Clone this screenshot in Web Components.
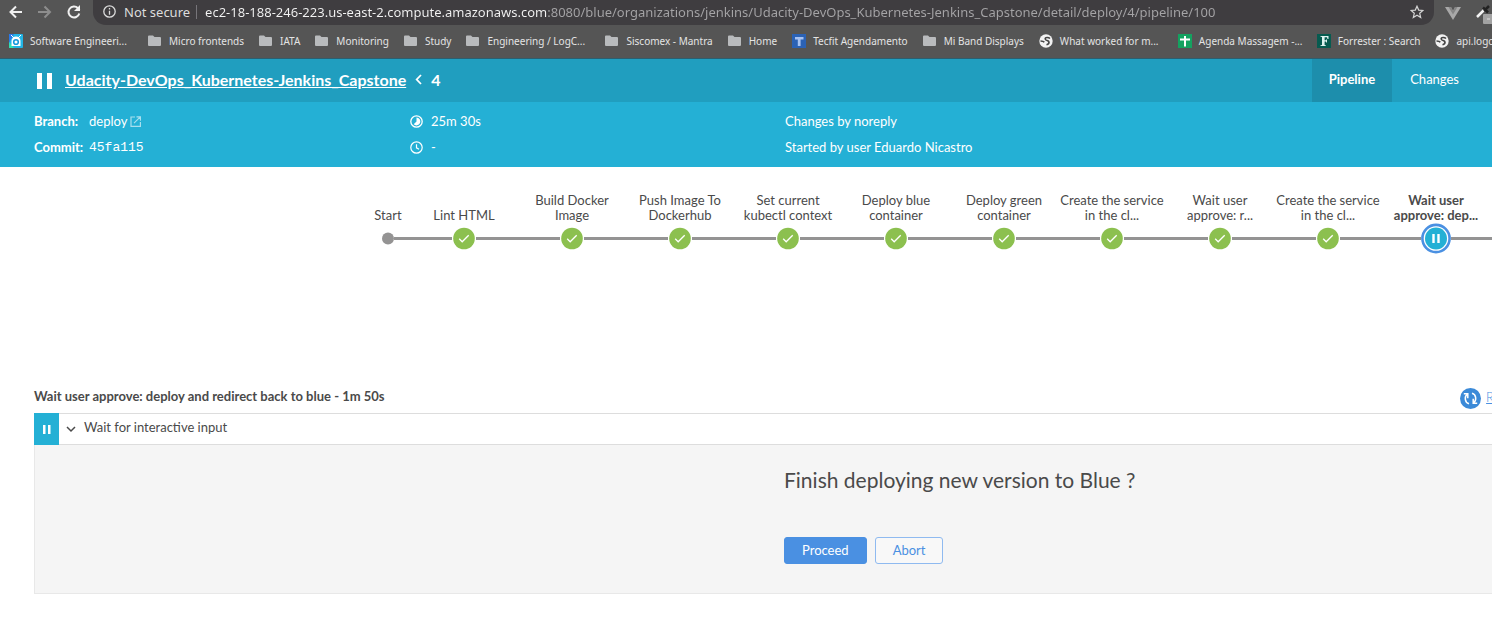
<!DOCTYPE html>
<html lang="en">
<head>
<meta charset="utf-8">
<title>Udacity-DevOps_Kubernetes-Jenkins_Capstone / deploy / 4</title>
<style>
  html, body { margin: 0; background: #fff; }
  body { font-family: Lato, sans-serif; font-size: 13px; line-height: 16px; color: #4a4a4a; overflow-x: hidden; }
</style>
</head>
<body>
<jenkins-window></jenkins-window>

<template id="jenkins-window">
  <style>
    :host { display: block; overflow: hidden; }
  </style>
  <browser-bar></browser-bar>
  <bookmark-bar></bookmark-bar>
  <run-header></run-header>
  <main>
    <pipeline-graph></pipeline-graph>
    <step-log></step-log>
  </main>
</template>

<template id="browser-bar">
  <style>
    :host { display: flex; align-items: center; height: 25px; padding: 0 0 0 8px; background: #555; font-family: "Noto Sans", sans-serif; font-size: 13px; color: #dcdcdc; overflow: hidden; }
    button { appearance: none; border: 0; padding: 0; background: none; color: #f1f1f1; display: flex; flex: none; }
    button[disabled] { color: #8d8d8d; }
    svg { display: block; flex: none; }
    nav { display: flex; gap: 13px; padding-bottom: 2px; }
    .omni { flex: 1; min-width: 0; display: flex; align-items: center; height: 25px; box-sizing: border-box; margin-left: 11px; padding: 0 10px 2px; background: #3f3d40; border-radius: 0 0 13px 13px; }
    .secure { margin-left: 8px; padding-right: 6px; border-right: 1px solid #77757a; line-height: 14px; white-space: nowrap; }
    input { flex: 1; min-width: 0; height: 23px; border: 0; padding: 0; margin-left: 8px; outline: 0; font: inherit; -webkit-text-fill-color: transparent; background: linear-gradient(90deg, #f4f4f4 343px, #a5a4a6 343px); -webkit-background-clip: text; background-clip: text; }
    .ext { display: flex; align-items: center; gap: 14px; width: 58px; flex: none; padding-left: 11px; box-sizing: border-box; overflow: hidden; }
  </style>
  <nav>
    <button aria-label="Back"><svg width="16" height="16" viewBox="0 0 16 16" fill="none" stroke="currentColor" stroke-width="2"><path d="M14 8H3M8 2.500L2.500 8 8 13.500"/></svg></button>
    <button aria-label="Forward" disabled><svg width="16" height="16" viewBox="0 0 16 16" fill="none" stroke="currentColor" stroke-width="2"><path d="M1 8h11M7.500 2.500L13 8 7.500 13.500"/></svg></button>
    <button aria-label="Reload"><svg width="16" height="16" viewBox="0 0 16 16" fill="none" stroke="currentColor" stroke-width="2"><path d="M13.300 9.500A5.500 5.500 0 1 1 12 4.200L13.500 6"/><path d="M14 1v6H8z" fill="currentColor" stroke="none"/></svg></button>
  </nav>
  <div class="omni">
    <svg width="13" height="13" viewBox="0 0 13 13" fill="none" stroke="#dcdcdc" stroke-width="1.300"><circle cx="6.500" cy="6.500" r="5.700"/><path d="M6.500 3v1.500M6.500 5.700v4"/></svg>
    <span class="secure">Not secure</span>
    <input aria-label="Address" type="text" spellcheck="false" value="ec2-18-188-246-223.us-east-2.compute.amazonaws.com:8080/blue/organizations/jenkins/Udacity-DevOps_Kubernetes-Jenkins_Capstone/detail/deploy/4/pipeline/100">
    <button aria-label="Bookmark this page"><svg width="14" height="14" viewBox="0 0 14 14" fill="none" stroke="#d5d5d5" stroke-width="1.200"><path d="M7 1.200l1.700 3.900 4.200.400-3.200 2.800 1 4.200L7 10.300l-3.700 2.200 1-4.200L1.100 5.500l4.200-.400z"/></svg></button>
  </div>
  <div class="ext">
    <svg width="16" height="14" viewBox="0 0 16 14"><path d="M0 1h6l2 4 2-4h6L8 14z" fill="#a8a8a8"/><path d="M3.500 1H6l2 4 2-4h2.500L8 8.500z" fill="#858585"/></svg>
    <svg width="18" height="22" viewBox="0 0 18 22"><path d="M2 15l7-7" stroke="#f4f4f4" stroke-width="2.500"/><path d="M8 5.500l5 5M9 9l5-5" stroke="#222" stroke-width="2.500"/><rect x="8" y="12" width="12" height="10" rx="1" fill="#a3a3a3"/><path d="M12 17h3" stroke="#ddd"/></svg>
  </div>
</template>

<template id="bookmark-bar">
  <style>
    :host { display: flex; align-items: center; height: 31px; padding: 0 0 2px 9px; background: #555; border-bottom: 1px solid #2b5f70; overflow: hidden; font-family: "Noto Sans", sans-serif; font-size: 10px; color: #e4e4e4; }
  </style>
  <book-mark icon="hub" wide>Software Engineeri...</book-mark>
  <book-mark icon="folder">Micro frontends</book-mark>
  <book-mark icon="folder">IATA</book-mark>
  <book-mark icon="folder">Monitoring</book-mark>
  <book-mark icon="folder">Study</book-mark>
  <book-mark icon="folder" wide>Engineering / LogC...</book-mark>
  <book-mark icon="folder">Siscomex - Mantra</book-mark>
  <book-mark icon="folder">Home</book-mark>
  <book-mark icon="tecfit">Tecfit Agendamento</book-mark>
  <book-mark icon="folder">Mi Band Displays</book-mark>
  <book-mark icon="globe" wide>What worked for m...</book-mark>
  <book-mark icon="sheet" wide>Agenda Massagem -...</book-mark>
  <book-mark icon="forrester">Forrester : Search</book-mark>
  <book-mark icon="globe">api.logco</book-mark>
</template>

<template id="book-mark">
  <style>
    :host { display: block; flex: none; padding-right: 15px; box-sizing: border-box; }
    :host([wide]) { width: 139px; padding-right: 0; }
    a { display: flex; align-items: center; gap: 7px; color: inherit; text-decoration: none; white-space: nowrap; }
    svg { display: block; flex: none; }
  </style>
  <a href="#"><svg width="14" height="14" viewBox="0 0 14 14" aria-hidden="true"></svg><span><slot></slot></span></a>
</template>

<template id="run-header">
  <style>
    :host { display: block; background: #24b0d5; color: #fff; }
    .top { display: flex; align-items: center; height: 43px; padding-left: 37px; background: #209ebf; }
    svg { display: block; flex: none; }
    h1 { display: flex; align-items: center; gap: 9px; flex: 1; margin: 0 0 0 12px; padding-bottom: 2px; font-size: 16px; line-height: 20px; font-weight: 700; }
    a { color: inherit; }
    nav { display: flex; align-self: stretch; margin-right: 16px; }
    nav a { display: flex; align-items: center; padding: 0 17px 3px 18px; text-decoration: none; }
    nav a[aria-current] { background: #1d8eac; font-weight: 700; padding-left: 17px; }
    .info { display: grid; grid-template-columns: 376fr 375fr 707fr; row-gap: 10px; padding: 11px 0 12px 34px; }
    .info div { display: flex; align-items: center; height: 16px; }
    b { width: 55px; }
    .icon { margin-right: 8px; }
    code { font: 13px/16px "Liberation Mono", monospace; padding-top: 2px; }
    .out { margin-left: 3px; opacity: .6; }
  </style>
  <div class="top">
    <svg width="16" height="18" viewBox="0 0 16 18" fill="#fff"><path d="M0 1h5v16H0zM10 1h5v16h-5z"/></svg>
    <h1><a href="#">Udacity-DevOps_Kubernetes-Jenkins_Capstone</a>
      <svg width="7" height="11" viewBox="0 0 7 11" fill="none" stroke="#fff" stroke-width="1.800"><path d="M6 1L1.700 5.500 6 10"/></svg><span>4</span></h1>
    <nav><a href="#" aria-current="page">Pipeline</a><a href="#">Changes</a></nav>
  </div>
  <div class="info">
    <div><b>Branch:</b><span>deploy</span><svg class="out" width="11" height="11" viewBox="0 0 11 11" fill="none" stroke="#fff" stroke-width="1.200"><path d="M5 1H1v9.400h9.400V6M6.500.800h4v4M10.300.900L4 7.200"/></svg></div>
    <div><svg class="icon" width="13" height="13" viewBox="0 0 13 13"><circle cx="6.500" cy="6.500" r="5.700" fill="none" stroke="#fff" stroke-width="1.300"/><path d="M6.500 2.600a3.900 3.900 0 1 1-2.800 6.700L6.500 6.500z" fill="#fff"/></svg><span>25m 30s</span></div>
    <div><span>Changes by noreply</span></div>
    <div><b>Commit:</b><code>45fa115</code></div>
    <div><svg class="icon" width="13" height="13" viewBox="0 0 13 13" fill="none" stroke="#fff" stroke-width="1.200"><circle cx="6.500" cy="6.500" r="5.700"/><path d="M6.500 3.300v3.500l2.500 1.500"/></svg><span>-</span></div>
    <div><span>Started by user Eduardo Nicastro</span></div>
  </div>
</template>

<template id="pipeline-graph">
  <style>
    :host { display: flex; height: 217px; padding: 26px 0 0 366px; box-sizing: border-box; overflow: hidden; }
  </style>
  <pipeline-stage state="start">Start</pipeline-stage>
  <pipeline-stage state="ok">Lint HTML</pipeline-stage>
  <pipeline-stage state="ok">Build Docker<br>Image</pipeline-stage>
  <pipeline-stage state="ok">Push Image To<br>Dockerhub</pipeline-stage>
  <pipeline-stage state="ok">Set current<br>kubectl context</pipeline-stage>
  <pipeline-stage state="ok">Deploy blue<br>container</pipeline-stage>
  <pipeline-stage state="ok">Deploy green<br>container</pipeline-stage>
  <pipeline-stage state="ok">Create the service<br>in the cl...</pipeline-stage>
  <pipeline-stage state="ok">Wait user<br>approve: r...</pipeline-stage>
  <pipeline-stage state="ok">Create the service<br>in the cl...</pipeline-stage>
  <pipeline-stage state="paused">Wait user<br>approve: dep...</pipeline-stage>
  <pipeline-stage state="next"></pipeline-stage>
</template>

<template id="pipeline-stage">
  <style>
    :host { display: block; flex: none; width: 108px; text-align: center; line-height: 15px; }
    :host([state="start"]) { width: 44px; }
    :host([state="paused"]) { font-weight: 700; }
    .label { display: flex; align-items: flex-end; justify-content: center; height: 30px; white-space: nowrap; }
    .track { display: flex; align-items: center; height: 31px; }
    .track::before, .track::after { content: ""; flex: 1; height: 3px; background: #949393; }
    :host([state="start"]) .track::before { background: none; }
    svg { display: block; flex: none; }
  </style>
  <div class="label"><span><slot></slot></span></div>
  <div class="track"></div>
</template>

<template id="step-log">
  <style>
    :host { display: block; padding-left: 34px; }
    header { display: flex; align-items: center; height: 29px; }
    h2 { flex: 1; margin: 0; padding-bottom: 6px; font-size: 13px; line-height: 16px; }
    .restart { display: flex; align-items: center; gap: 5px; color: #4a90e2; margin-right: -2px; font-weight: 300; }
    .restart span { padding-bottom: 4px; }
    svg { display: block; flex: none; }
    .step { display: flex; align-items: center; height: 32px; box-sizing: border-box; border-top: 1px solid #ddd; border-bottom: 1px solid #ddd; }
    .state { display: flex; align-items: center; justify-content: center; width: 25px; height: 32px; background: #24b0d5; }
    .toggle { display: flex; align-items: center; gap: 8px; appearance: none; margin: 0; padding: 0 0 4px 7px; border: 0; background: none; font: inherit; color: inherit; }
    .toggle svg { margin-top: 4px; }
    .prompt { display: grid; grid-template-columns: 749fr 708fr; height: 149px; box-sizing: border-box; background: #f5f5f5; border-left: 1px solid #e8e8e8; border-bottom: 1px solid #e8e8e8; }
    .body { grid-column: 2; padding-top: 20px; }
    h3 { margin: 0 0 42px; font-size: 21px; line-height: 30px; font-weight: 400; }
    .actions { display: flex; gap: 8px; }
    .actions button { height: 27px; padding: 0 17px 2px; border: 1px solid #8fbaf0; border-radius: 3px; background: #f8f8f8; color: #4a90e2; font: inherit; }
    .actions .primary { background: #4a90e2; border-color: #4a90e2; color: #fff; }
  </style>
  <header>
    <h2>Wait user approve: deploy and redirect back to blue - 1m 50s</h2>
    <a class="restart" href="#" aria-label="Restart"><svg width="21" height="21" viewBox="0 0 21 21"><circle cx="10.500" cy="10.500" r="10.500" fill="#3b8ad8"/><g fill="none" stroke="#fff" stroke-width="1.500"><path d="M9 15.800C4.500 14.500 4.300 8.500 7.300 6.200M12 5.200c4.500 1.300 4.700 7.300 1.700 9.600"/><path d="M3.800 5.800h4v4.500M17.200 15.200h-4v-4.500"/></g></svg><span>R</span></a>
  </header>
  <div class="step">
    <span class="state"><svg width="8" height="9" viewBox="0 0 8 9" fill="#fff"><path d="M0 0h2.500v9H0zM5 0h2.500v9H5z"/></svg></span>
    <button class="toggle" aria-expanded="true"><svg width="10" height="7" viewBox="0 0 10 7" fill="none" stroke="#4a4a4a" stroke-width="1.500"><path d="M1 1l4 4 4-4"/></svg><span>Wait for interactive input</span></button>
  </div>
  <div class="prompt">
    <div class="body">
      <h3>Finish deploying new version to Blue ?</h3>
      <div class="actions"><button class="primary">Proceed</button><button>Abort</button></div>
    </div>
  </div>
</template>

<script>
  const stamp = (host, name) => {
    const root = host.attachShadow({ mode: "open" });
    root.append(document.getElementById(name).content.cloneNode(true));
    return root;
  };

  const ICONS = {
    folder: '<path d="M0 2.500Q0 1.500 1 1.500h4l1.500 1.500H12q1 0 1 1V11q0 1-1 1H1q-1 0-1-1z" fill="#b9bbbd"/>',
    hub: '<rect width="14" height="14" rx="1" fill="#22b5e6"/><path d="M0 9l5-9H0z" fill="#2a79e8"/><path d="M0 14V8l5 6z" fill="#35e0b0"/><path d="M2.500 12V7a4.500 4.500 0 0 1 9 0v5z" fill="#fff"/><circle cx="7" cy="8" r="2.300" fill="none" stroke="#1698dd" stroke-width="1.600"/><path d="M2 1l3 3M12 1L9 4" stroke="#fff"/>',
    tecfit: '<rect width="14" height="14" fill="#2b62b5"/><path d="M3 3h8.500v2.500H8.600V12H5.800V5.500H3z" fill="#a7c2f2"/>',
    globe: '<circle cx="7" cy="7" r="6.700" fill="#f2f2f2"/><path d="M11 4.500C9.500 3 6 3 6.200 5s3.600 1 3.800 3-1.500 2.500-2.500 2.700M1.500 7c1.500 0 3 0 3.800 1.200" fill="none" stroke="#444" stroke-width="1.600"/>',
    sheet: '<rect width="14" height="14" fill="#14a260"/><path d="M7 2v10.500M2 5.500h10" stroke="#fff" stroke-width="2"/>',
    forrester: '<rect width="14" height="14" fill="#075b50"/><path d="M3.500 2h8v3h-1L10 3.300H7.600v3h1.300l.3-.8h.8v3h-.8l-.3-.9H7.600V11l1.200.3v.7H3.500v-.7L5 11V3L3.500 2.700z" fill="#dff3f0"/>'
  };

  const NODES = {
    start: '<svg width="12" height="13" viewBox="0 0 12 13"><circle cx="6" cy="6.500" r="6" fill="#949393"/></svg>',
    ok: '<svg width="24" height="25" viewBox="0 0 24 25"><circle cx="12" cy="12.500" r="10.800" fill="#8cc04f"/><path d="M7.200 12.800l3 3 6.500-6.500" fill="none" stroke="#fff" stroke-width="1.300"/></svg>',
    paused: '<svg width="30" height="31" viewBox="0 0 30 31"><circle cx="15" cy="15.500" r="13.600" fill="#fff" stroke="#4a90e2" stroke-width="2.600"/><circle cx="15" cy="15.500" r="11" fill="#24b0d5"/><path d="M11.300 11h2.400v9h-2.400zM16.300 11h2.400v9h-2.400z" fill="#fff"/></svg>'
  };

  for (const name of ["browser-bar", "bookmark-bar", "run-header", "pipeline-graph", "step-log", "jenkins-window"]) {
    customElements.define(name, class extends HTMLElement {
      constructor() { super(); stamp(this, name); }
    });
  }

  customElements.define("book-mark", class extends HTMLElement {
    connectedCallback() {
      if (this.shadowRoot) return;
      stamp(this, "book-mark").querySelector("svg").innerHTML = ICONS[this.getAttribute("icon")];
    }
  });

  customElements.define("pipeline-stage", class extends HTMLElement {
    connectedCallback() {
      if (this.shadowRoot) return;
      stamp(this, "pipeline-stage").querySelector(".track").innerHTML = NODES[this.getAttribute("state")] || "";
    }
  });
</script>
</body>
</html>
